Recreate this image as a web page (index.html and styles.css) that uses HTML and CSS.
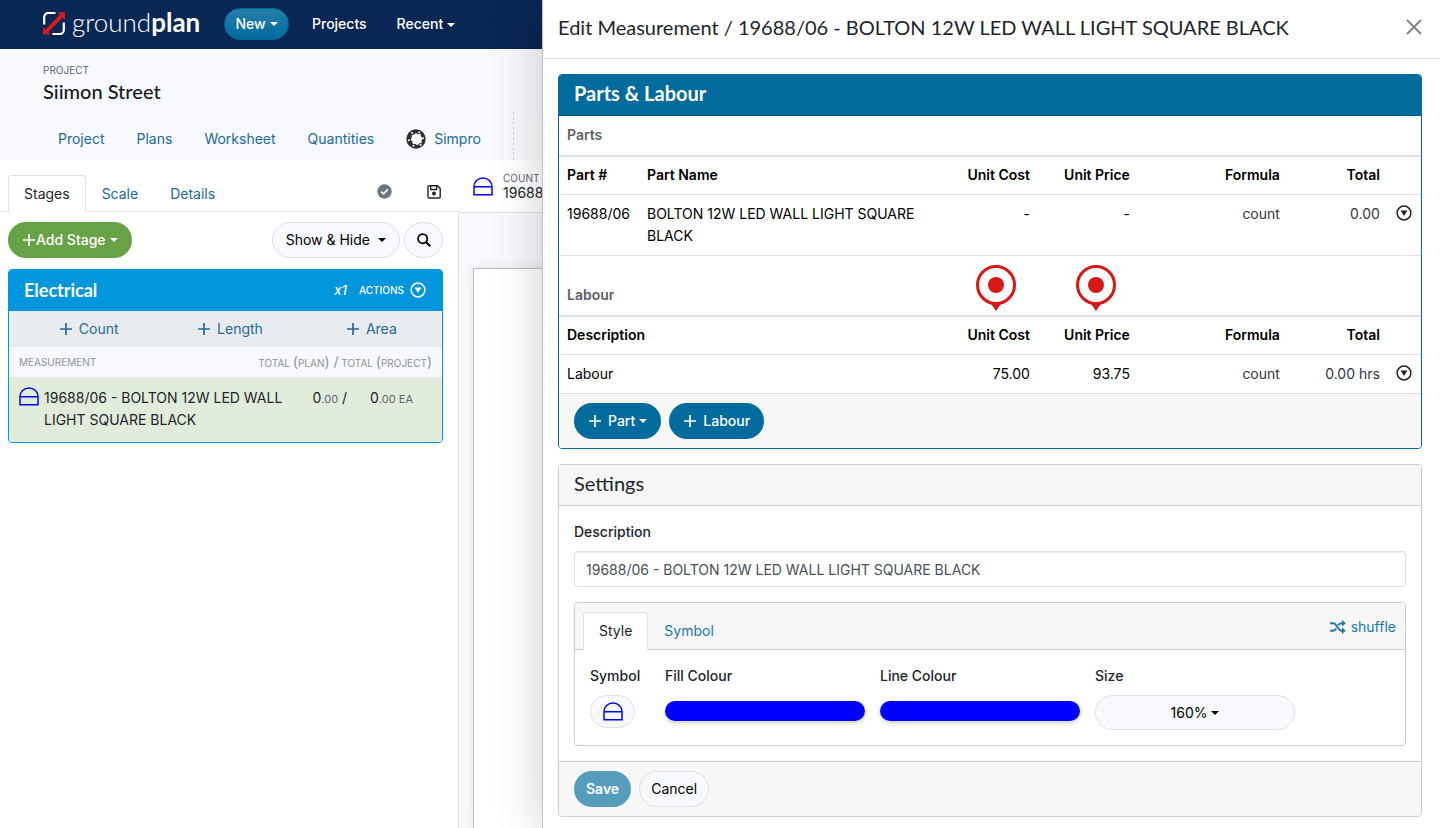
FILE: index.html
```html
<!DOCTYPE html>
<html lang="en">
<head>
<meta charset="utf-8">
<title>Groundplan - Siimon Street</title>
<link rel="stylesheet" href="styles.css">
</head>
<body>
<svg class="defs" aria-hidden="true">
  <symbol id="plus" viewBox="0 0 14 14"><path d="M7 1v12M1 7h12" fill="none" stroke="currentColor" stroke-width="1.7"/></symbol>
  <symbol id="dome" viewBox="0 0 20 19"><path d="M1 17.7V9.5a9 8.5 0 0 1 18 0v8.2zM1 9.8h18" fill="none" stroke="#0000ff" stroke-width="1.5"/></symbol>
  <symbol id="more" viewBox="0 0 16 16"><circle cx="8" cy="8" r="6.9" fill="none" stroke="currentColor" stroke-width="1.5"/><path d="M4.6 5.6h6.8L8 11z" fill="currentColor"/></symbol>
  <symbol id="pin" viewBox="0 0 40 46"><path d="M14 37.5h12L20 46z" fill="#d71718"/><circle cx="20" cy="20" r="18.5" fill="#fff" stroke="#d71718" stroke-width="3"/><circle cx="20" cy="20" r="8" fill="#d71718"/></symbol>
</svg>

<div class="app">
  <header class="topbar">
    <a class="logo" href="#">
      <svg width="22" height="23" viewBox="0 0 22 23" aria-hidden="true">
        <path d="M1.200 12.500V5a4 4 0 0 1 4-4h7.300M20.800 10.500V18a4 4 0 0 1-4 4H9.500" fill="none" stroke="#fff" stroke-width="2.200"/>
        <path d="M14.500.3H22v7.500l-2.300-2.300L5.300 20.300 7.500 22.600H0V15l2.400 2.400L16.900 2.700z" fill="#d71920"/>
      </svg>
      <span class="wordmark">ground<b>plan</b></span>
    </a>
    <button class="btn btn-new">New<i class="caret"></i></button>
    <a class="topbar-link" href="#">Projects</a>
    <a class="topbar-link" href="#">Recent<i class="caret"></i></a>
  </header>

  <section class="project">
    <div class="project-label">PROJECT</div>
    <h1 class="project-name">Siimon Street</h1>
    <nav class="project-nav">
      <a href="#">Project</a>
      <a href="#">Plans</a>
      <a href="#">Worksheet</a>
      <a href="#">Quantities</a>
      <a href="#" class="simpro">
        <svg width="20" height="20" viewBox="0 0 20 20" aria-hidden="true">
          <circle cx="10" cy="10" r="9.700" fill="#2d2e30"/>
          <path d="M10 3.900l2 1.300 2.500-.1.600 2.400 1.700 1.800-1.200 2 .1 2.500-2.500.6-1.800 1.800-2-1.300-2.500.1-.6-2.400-1.700-1.900 1.200-2-.1-2.500 2.500-.6z" fill="#fff"/>
          <g fill="#fff"><circle cx="6.200" cy="3.900" r="1"/><circle cx="13.300" cy="3.500" r="1"/><circle cx="17" cy="9.300" r="1"/><circle cx="14.500" cy="15.700" r="1"/><circle cx="7.500" cy="16.700" r="1"/><circle cx="2.900" cy="11.200" r="1"/></g>
        </svg>Simpro</a>
      <div class="nav-tools"><div class="tool-box"></div></div>
    </nav>
  </section>

  <div class="work">
    <aside class="sidebar">
      <div class="tabs">
        <button class="tab active">Stages</button>
        <button class="tab">Scale</button>
        <button class="tab">Details</button>
        <div class="tab-icons">
          <button class="icon-btn" aria-label="Saved">
            <svg width="15" height="15" viewBox="0 0 15 15"><circle cx="7.500" cy="7.500" r="7.200" fill="#6c757d"/><path d="M4.200 7.700l2.300 2.200 4.400-4.500" fill="none" stroke="#fff" stroke-width="1.700"/></svg>
          </button>
          <button class="icon-btn" aria-label="Save">
            <svg width="14" height="14" viewBox="0 0 14 14"><path d="M2 .8h8.600L13.200 3.400V12a1 1 0 0 1-1 1H2a1 1 0 0 1-1-1V1.800a1 1 0 0 1 1-1zM3.700 1v3.500h5.900V1" fill="none" stroke="#212529" stroke-width="1.400"/><circle cx="7" cy="8.500" r="1.900" fill="#212529"/></svg>
          </button>
        </div>
      </div>
      <div class="toolbar">
        <button class="btn btn-green"><svg width="14" height="14"><use href="#plus"/></svg>Add Stage<i class="caret"></i></button>
        <button class="btn btn-light push">Show &amp; Hide<i class="caret wide"></i></button>
        <button class="btn btn-light btn-search" aria-label="Search">
          <svg width="14" height="14" viewBox="0 0 14 14"><circle cx="5.700" cy="5.700" r="4.600" fill="none" stroke="#000" stroke-width="1.800"/><path d="M9 9l4.200 4.200" stroke="#000" stroke-width="2"/></svg>
        </button>
      </div>

      <section class="stage">
        <header class="stage-head">
          <h2>Electrical</h2>
          <span class="multiplier">x1</span>
          <button class="stage-actions">ACTIONS<svg width="16" height="16"><use href="#more"/></svg></button>
        </header>
        <div class="stage-add">
          <button><svg width="14" height="14"><use href="#plus"/></svg>Count</button>
          <button><svg width="14" height="14"><use href="#plus"/></svg>Length</button>
          <button><svg width="14" height="14"><use href="#plus"/></svg>Area</button>
        </div>
        <div class="stage-cols"><span>MEASUREMENT</span><span>TOTAL <em>(</em>PLAN<em>) /</em> TOTAL <em>(</em>PROJECT<em>)</em></span></div>
        <div class="measure">
          <svg width="20" height="19"><use href="#dome"/></svg>
          <span class="measure-name">19688/06 - BOLTON 12W LED WALL LIGHT SQUARE BLACK</span>
          <span>0<small>.00</small> /</span>
          <span class="measure-total">0<small>.00 EA</small></span>
        </div>
      </section>
    </aside>

    <main class="viewer">
      <div class="viewer-head">
        <svg width="20" height="19"><use href="#dome"/></svg>
        <div><div class="viewer-label">COUNT</div><div class="viewer-name">19688/06</div></div>
      </div>
      <div class="canvas"><div class="sheet"></div></div>
    </main>
  </div>
</div>

<section class="panel" role="dialog" aria-labelledby="panel-title">
  <header class="panel-head">
    <h2 id="panel-title">Edit Measurement / 19688/06 - BOLTON 12W LED WALL LIGHT SQUARE BLACK</h2>
    <button class="icon-btn" aria-label="Close"><svg width="16" height="16" viewBox="0 0 16 16"><path d="M1 1l14 14M15 1L1 15" stroke="#7f7f7f" stroke-width="1.800"/></svg></button>
  </header>

  <div class="panel-body">
    <section class="card card-blue">
      <h3 class="card-head">Parts &amp; Labour</h3>
      <table class="grid">
        <colgroup><col class="c-num"><col><col class="c-100"><col class="c-100"><col class="c-150"><col class="c-100"><col class="c-act"></colgroup>
        <tbody>
          <tr class="title"><td colspan="7">Parts</td></tr>
          <tr><th>Part #</th><th>Part Name</th><th class="r">Unit Cost</th><th class="r">Unit Price</th><th class="r">Formula</th><th class="r">Total</th><th></th></tr>
          <tr><td class="nw">19688/06</td><td>BOLTON 12W LED WALL LIGHT SQUARE BLACK</td><td class="r">-</td><td class="r">-</td><td class="r soft">count</td><td class="r soft">0.00</td><td class="act"><button class="icon-btn" aria-label="Part actions"><svg width="16" height="16"><use href="#more"/></svg></button></td></tr>
        </tbody>
        <tbody>
          <tr class="title tall"><td colspan="2">Labour</td><td class="pin"><svg width="40" height="46"><use href="#pin"/></svg></td><td class="pin"><svg width="40" height="46"><use href="#pin"/></svg></td><td colspan="3"></td></tr>
          <tr><th colspan="2">Description</th><th class="r">Unit Cost</th><th class="r">Unit Price</th><th class="r">Formula</th><th class="r">Total</th><th></th></tr>
          <tr><td colspan="2">Labour</td><td class="r">75.00</td><td class="r">93.75</td><td class="r soft">count</td><td class="r soft">0.00 hrs</td><td class="act"><button class="icon-btn" aria-label="Labour actions"><svg width="16" height="16"><use href="#more"/></svg></button></td></tr>
        </tbody>
      </table>
      <footer class="card-foot">
        <button class="btn btn-blue"><svg width="14" height="14"><use href="#plus"/></svg>Part<i class="caret"></i></button>
        <button class="btn btn-blue"><svg width="14" height="14"><use href="#plus"/></svg>Labour</button>
      </footer>
    </section>

    <form class="card">
      <h3 class="card-head">Settings</h3>
      <div class="settings">
        <label for="desc">Description</label>
        <input id="desc" type="text" value="19688/06 - BOLTON 12W LED WALL LIGHT SQUARE BLACK">
        <div class="card inner">
          <div class="inner-head">
            <button type="button" class="tab active">Style</button>
            <button type="button" class="tab">Symbol</button>
            <a class="shuffle" href="#"><svg width="16" height="14" viewBox="0 0 16 14" aria-hidden="true"><path d="M0 3.200h3.200c3.600 0 4.800 7.600 8.400 7.600H13M0 10.800h3.200c1.300 0 2.200-1 2.900-2.300M8 5.300c.8-1.200 1.900-2.100 3.600-2.100H13" fill="none" stroke="currentColor" stroke-width="2"/><path d="M12 0l3.800 3.200L12 6.400zM12 7.600l3.800 3.200L12 14z" fill="currentColor"/></svg>shuffle</a>
          </div>
          <div class="fields">
            <div class="field field-symbol"><label for="sym">Symbol</label><button type="button" id="sym" class="btn btn-light btn-symbol"><svg width="20" height="19"><use href="#dome"/></svg></button></div>
            <div class="field"><label for="fill">Fill Colour</label><button type="button" id="fill" class="swatch"></button></div>
            <div class="field"><label for="line">Line Colour</label><button type="button" id="line" class="swatch"></button></div>
            <div class="field"><label for="size">Size</label><button type="button" id="size" class="btn btn-light btn-size">160%<i class="caret"></i></button></div>
          </div>
        </div>
      </div>
      <footer class="card-foot">
        <button type="button" class="btn btn-save">Save</button>
        <button type="button" class="btn btn-light">Cancel</button>
      </footer>
    </form>
  </div>
</section>
</body>
</html>
```
FILE: styles.css
```css
* { box-sizing: border-box; }
body {
  margin: 0;
  height: 100vh;
  overflow: hidden;
  font: 14px/22px Inter, "Liberation Sans", sans-serif;
  color: #212529;
  background: #fff;
}
h1, h2, h3 { margin: 0; font-family: Lato, "Open Sans", sans-serif; font-weight: 400; }
button, input { font: inherit; color: inherit; }
button { background: none; border: 0; padding: 0; cursor: pointer; }
a { color: #20699b; text-decoration: none; }
svg { display: block; flex: none; }
.defs { position: absolute; width: 0; height: 0; }

.caret {
  display: inline-block;
  margin-left: 4px;
  vertical-align: middle;
  border: 4px solid transparent;
  border-top-color: currentColor;
  border-bottom: 0;
}
.caret.wide { margin-left: 8px; }
.icon-btn { display: inline-flex; }

.btn {
  display: inline-flex;
  align-items: center;
  justify-content: center;
  height: 36px;
  padding: 0 12px;
  border-radius: 18px;
  white-space: nowrap;
}
.btn-light { padding: 0 11px; background: #f8f9fc; border: 1px solid #dee2e6; color: #000; }
.btn-blue { background: #006b9c; color: #fff; padding: 0 14px; font-weight: 500; }
.btn-blue svg { margin-right: 6px; }
.btn-save { background: #569cbb; color: #fff; font-weight: 600; }
.btn-green { padding: 0 14px; background: #67a346; color: #fff; font-weight: 500; }

.app { display: flex; flex-direction: column; height: 100%; }
.topbar {
  display: flex;
  align-items: center;
  height: 49px;
  padding: 0 43px 2px;
  background: #082754;
}
.logo { display: flex; align-items: center; gap: 7px; width: 181px; color: #fff; }
.wordmark { padding-bottom: 4px; font: 300 26px/32px Lato, sans-serif; }
.wordmark b { font-weight: 700; }
.btn-new {
  width: 65px;
  height: 32px;
  margin-right: 23px;
  color: #fff;
  font-weight: 500;
  background: linear-gradient(#267fab, #006b9c);
  border: 1px solid #006b9c;
}
.topbar-link { margin-right: 30px; color: #fff; font-weight: 500; }

.project { padding: 14px 0 0 43px; height: 111px; background: #f8f9fc; }
.project-label, .viewer-label { font-size: 10px; line-height: 14px; color: #5f666d; }
.project-name { font-size: 20px; line-height: 28px; font-weight: 500; color: #17191c; }
.project-nav { display: flex; align-items: center; gap: 32px; padding: 7px 0 0 15px; }
.project-nav a { padding-top: 6px; line-height: 20px; }
.simpro { display: flex; gap: 8px; }
.nav-tools { flex: 1; padding: 7px 0 0 14px; height: 48px; border-left: 1px dashed #d5d8dc; }
.tool-box { height: 41px; background: #fcfcfd; border-radius: 4px 0 0; }

.work { display: flex; flex: 1; }
.sidebar { width: 458px; flex: none; padding-top: 15px; }
.tabs { display: flex; height: 37px; padding-left: 8px; border-bottom: 1px solid #dee2e6; }
.tab { height: 37px; padding: 0 15px; border: 1px solid transparent; color: #20699b; }
.tab.active {
  color: #212529;
  background: #fff;
  border-color: #dee2e6 #dee2e6 #fff;
  border-radius: 4px 4px 0 0;
}
.tab-icons { display: flex; align-items: center; gap: 35px; margin-left: auto; padding: 0 17px 3px 0; }
.toolbar { display: flex; gap: 4px; padding: 10px 15px 11px 8px; }
.toolbar .push { margin-left: auto; padding: 0 13px; }
.toolbar .btn-search { width: 39px; padding: 0; }

.stage { margin: 0 15px 0 8px; border: 1px solid #0096dd; border-radius: 4px; overflow: hidden; }
.stage-head {
  display: flex;
  align-items: center;
  height: 41px;
  padding: 0 16px 2px 15px;
  background: #0096dd;
  color: #fff;
}
.stage-head h2 { flex: 1; font-size: 18px; font-weight: 700; }
.multiplier { font-size: 13px; font-style: italic; font-weight: 500; margin-right: 12px; }
.stage-actions { display: flex; align-items: center; gap: 6px; font-size: 10px; font-weight: 500; }
.stage-add { display: grid; grid-template-columns: repeat(3, 1fr); height: 36px; padding-left: 9px; background: #e9ecef; }
.stage-add button { display: flex; align-items: center; justify-content: center; gap: 6px; color: #20699b; }
.stage-cols {
  display: flex;
  justify-content: space-between;
  padding: 4px 10px 3px;
  font-size: 10px;
  color: #8d9399;
  background: #f8f9fc;
}
.stage-cols em { font-size: 14px; font-style: normal; }
.measure { display: flex; gap: 5px; padding: 10px 29px 11px 10px; background: #e1ecdb; }
.measure-name { flex: 1; padding-right: 24px; }
.measure small { font-size: 11px; color: #5f666d; }
.measure-total { padding-left: 18px; }

.viewer { display: flex; flex-direction: column; flex: 1; }
.viewer-head { display: flex; align-items: center; gap: 10px; height: 53px; padding: 0 15px; border-bottom: 1px solid #dee2e6; }
.viewer-name { line-height: 16px; }
.canvas { flex: 1; padding: 55px 0 0 14px; background: #f8f9fc; border-left: 1px solid #dee2e6; }
.sheet { height: 100%; background: #fff; border: 1px solid #b9bcbf; border-width: 1px 0 0 1px; box-shadow: 0 0 12px rgba(0, 0, 0, .08); }

.panel {
  position: absolute;
  top: 0;
  right: 0;
  bottom: 0;
  left: 542px;
  background: #fff;
  border-left: 1px solid #bfc0c2;
  box-shadow: 0 0 48px rgba(0, 0, 0, .2);
}
.panel-head {
  display: flex;
  align-items: center;
  justify-content: space-between;
  height: 59px;
  padding: 0 18px 5px 15px;
  border-bottom: 1px solid #dee2e6;
}
.panel-head h2 { font-size: 20px; line-height: 28px; }
.panel-body { display: flex; flex-direction: column; gap: 15px; padding: 15px 18px 0 15px; }

.card { border: 1px solid #cfcfcf; border-radius: 4px; overflow: hidden; background: #fff; }
.card-head {
  height: 41px;
  padding: 4px 15px;
  font-size: 20px;
  line-height: 28px;
  background: #f7f7f7;
  border-bottom: 1px solid #cfcfcf;
}
.card-blue { border-color: #006b9c; }
.card-blue .card-head { background: #006b9c; border-color: #005a83; color: #fff; font-weight: 700; }
.card-foot { display: flex; gap: 8px; padding: 9px 15px; background: #f7f7f7; }
form .card-foot { border-top: 1px solid #cfcfcf; }

.grid { width: 100%; table-layout: fixed; border-spacing: 0; color: #000; }
.grid th, .grid td { padding: 8px; text-align: left; vertical-align: top; border-bottom: 1px solid #dee2e6; }
.grid th { padding-top: 7px; font-weight: 600; }
.grid .r { text-align: right; }
.grid .soft { color: #32373c; }
.grid .nw { white-space: nowrap; }
.grid .title td { padding: 8px 8px 9px; border-bottom-width: 2px; color: #5c6166; font-weight: 600; }
.grid .tall td { vertical-align: bottom; }
.grid .title .pin { padding: 9px 22px 4px 0; }
.pin svg { margin-left: auto; }
.grid .act { padding: 10px 0 0 8px; color: #212529; }
.c-num { width: 80px; }
.c-100 { width: 100px; }
.c-150 { width: 150px; }
.c-act { width: 33px; }

.settings { padding: 15px; }
label { display: block; font-weight: 500; }
.settings input {
  display: block;
  width: 100%;
  height: 36px;
  margin: 8px 0 15px;
  padding: 0 11px;
  border: 1px solid #dcdfe6;
  border-radius: 4px;
  color: #495057;
  box-shadow: inset 0 1px 1px rgba(0, 0, 0, .075);
}
.inner-head { display: flex; height: 47px; padding: 9px 9px 0 8px; background: #f7f7f7; border-bottom: 1px solid #cfcfcf; }
.inner-head .tab { height: 38px; }
.inner-head .tab:not(.active), .shuffle { color: #1a7aa8; }
.shuffle { display: flex; align-items: center; gap: 5px; height: 30px; margin-left: auto; }
.fields { display: flex; gap: 15px; padding: 15px; }
.field { width: 200px; }
.field-symbol { width: 60px; }
.field .btn-symbol { width: 45px; height: 33px; margin-top: 8px; padding: 0; }
.swatch {
  display: block;
  width: 100%;
  height: 20px;
  margin-top: 14px;
  border-radius: 10px;
  background: #0000ff;
  box-shadow: 0 2px 4px rgba(0, 0, 0, .2);
}
.btn-size { width: 100%; height: 35px; margin-top: 8px; }
```
